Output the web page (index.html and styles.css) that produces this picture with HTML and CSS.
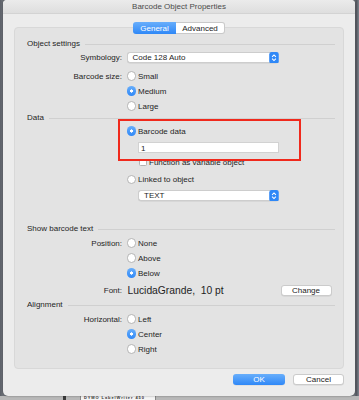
FILE: index.html
```html
<!DOCTYPE html>
<html lang="en">
<head>
    <meta charset="UTF-8">
    <title>Barcode Object Properties</title>
    <link rel="stylesheet" href="styles.css">
</head>
<body>
    <div class="desk">
        <div class="window">
            <div class="titlebar">Barcode Object Properties</div>

            <div class="tabs">
                <span class="tab on">General</span><span class="tab">Advanced</span>
            </div>

            <div class="group">
                <!-- Object settings -->
                <div class="hdr"><span>Object settings</span><i></i></div>
                <div class="row sym">
                    <span class="lbl">Symbology:</span>
                    <div class="popup sym-pop">
                        <span>Code 128 Auto</span>
                        <svg class="step" viewBox="0 0 10 12"><rect width="10" height="12" rx="2.5"/><path d="M3 5 L5 3 L7 5 M3 7 L5 9 L7 7"/></svg>
                    </div>
                </div>
                <div class="row size">
                    <span class="lbl">Barcode size:</span>
                    <span class="radio"></span><span class="opt">Small</span>
                </div>
                <div class="row">
                    <span class="lbl"></span>
                    <span class="radio on"></span><span class="opt">Medium</span>
                </div>
                <div class="row">
                    <span class="lbl"></span>
                    <span class="radio"></span><span class="opt">Large</span>
                </div>

                <!-- Data -->
                <div class="hdr"><span>Data</span><i></i></div>
                <div class="row bdata">
                    <span class="lbl"></span>
                    <span class="radio on"></span><span class="opt">Barcode data</span>
                </div>
                <div class="row field-row">
                    <span class="lbl"></span>
                    <div class="field">1</div>
                </div>
                <div class="row check-row">
                    <span class="lbl"></span>
                    <span class="check"></span><span class="opt">Function as variable object</span>
                </div>
                <div class="row linked">
                    <span class="lbl"></span>
                    <span class="radio"></span><span class="opt">Linked to object</span>
                </div>
                <div class="row text-row">
                    <span class="lbl"></span>
                    <div class="popup obj-pop">
                        <span>TEXT</span>
                        <svg class="step" viewBox="0 0 10 12"><rect width="10" height="12" rx="2.5"/><path d="M3 5 L5 3 L7 5 M3 7 L5 9 L7 7"/></svg>
                    </div>
                </div>

                <!-- Show barcode text -->
                <div class="hdr show"><span>Show barcode text</span><i></i></div>
                <div class="row pos">
                    <span class="lbl">Position:</span>
                    <span class="radio"></span><span class="opt">None</span>
                </div>
                <div class="row">
                    <span class="lbl"></span>
                    <span class="radio"></span><span class="opt">Above</span>
                </div>
                <div class="row">
                    <span class="lbl"></span>
                    <span class="radio on"></span><span class="opt">Below</span>
                </div>
                <div class="row font-row">
                    <span class="lbl">Font:</span>
                    <span class="font-name">LucidaGrande,&nbsp; 10 pt</span>
                    <span class="btn change">Change</span>
                </div>

                <!-- Alignment -->
                <div class="hdr align"><span>Alignment</span><i></i></div>
                <div class="row horiz">
                    <span class="lbl">Horizontal:</span>
                    <span class="radio"></span><span class="opt">Left</span>
                </div>
                <div class="row">
                    <span class="lbl"></span>
                    <span class="radio on"></span><span class="opt">Center</span>
                </div>
                <div class="row">
                    <span class="lbl"></span>
                    <span class="radio"></span><span class="opt">Right</span>
                </div>
            </div>

            <div class="footer">
                <span class="btn ok">OK</span>
                <span class="btn">Cancel</span>
            </div>

            <div class="highlight"></div>
        </div>

        <div class="under">
            <span class="mark"></span>
            <span class="printer">DYMO LabelWriter 450</span>
        </div>
    </div>
</body>
</html>
```

FILE: styles.css
```css
:root {
    --text: #1e1e1e;
    --blue: #2f88f7;
    --blue-light: #68aefb;
    --line: #d0d0d0;
}

body {
    margin: 0;
    font-family: 'Liberation Sans', Arial, sans-serif;
    font-size: 8px;
    color: var(--text);
    background: #63676d;
}

.desk {
    width: 359px;
    height: 400px;
    overflow: hidden;
    background: linear-gradient(to right, #5c6068 0, #6f737a 3px, #6f737a 355px, #4d5058 356px, #7d838c 359px);
}

.window {
    position: relative;
    margin-left: 3px;
    width: 352px;
    height: 396px;
    background: #ececec;
    border-radius: 4px 4px 5px 5px;
    box-shadow: 0 0 2px rgba(0, 0, 0, 0.45);
}

.titlebar {
    height: 14px;
    line-height: 14px;
    text-align: center;
    color: #4b4b4b;
    background: linear-gradient(#ebebeb, #dedede);
    border-bottom: 1px solid #d3d3d3;
    border-radius: 4px 4px 0 0;
    box-sizing: border-box;
}

.tabs {
    position: relative;
    z-index: 1;
    display: flex;
    justify-content: center;
    margin-top: 8px;
    height: 12px;
}

.tab {
    display: flex;
    align-items: center;
    justify-content: center;
    width: 49px;
    background: #fff;
    border: 1px solid #c9c9c9;
    border-left: none;
    border-radius: 0 3px 3px 0;
    box-sizing: border-box;
    color: #1e1e1e;
}

.tab.on {
    width: 43px;
    color: #fff;
    background: linear-gradient(var(--blue-light), var(--blue));
    border: none;
    border-radius: 3px 0 0 3px;
}

.group {
    margin: -7px 11px 0;
    padding: 11px 8px 11px 12px;
    background: #e3e3e3;
    border: 1px solid #d8d8d8;
    border-radius: 4px;
}

.hdr {
    display: flex;
    align-items: center;
    height: 8px;
}

.hdr i {
    flex: 1;
    height: 1px;
    margin: 2px 0 0 5px;
    background: var(--line);
}

.hdr.show {
    margin-top: 23px;
}

.hdr.align {
    margin-top: 2.5px;
}

.row {
    display: flex;
    align-items: center;
    height: 15px;
}

.lbl {
    width: 95px;
    margin-right: 4.5px;
    text-align: right;
    flex-shrink: 0;
}

.row.sym { margin-top: 3px; }
.row.size { margin-top: 3.5px; }
.row.bdata { margin-top: 2px; }
.row.field-row { margin-top: 3px; height: 12px; }
.row.check-row { margin-top: 1.5px; }
.row.linked { margin-top: 2px; }
.row.text-row { margin-top: 2.5px; height: 12px; }
.row.pos { margin-top: 3px; }
.row.font-row { margin-top: 2.5px; }
.row.horiz { margin-top: 3px; }

.radio {
    width: 9.5px;
    height: 9.5px;
    border-radius: 50%;
    background: #fff;
    border: 1px solid #b3b3b3;
    box-sizing: border-box;
    margin-right: 2px;
    flex-shrink: 0;
}

.radio.on {
    border: none;
    background: radial-gradient(circle, #fff 0, #fff 1.4px, transparent 1.8px), linear-gradient(var(--blue-light), var(--blue));
}

.opt {
    white-space: nowrap;
}

.popup {
    display: flex;
    align-items: center;
    height: 11.5px;
    background: #fff;
    border: 1px solid #cdcdcd;
    border-right: none;
    border-radius: 3px;
    box-sizing: border-box;
    box-shadow: 0 0.5px 0.5px rgba(0, 0, 0, 0.1);
}

.popup span {
    flex: 1;
    padding-left: 5px;
}

.sym-pop { width: 152.5px; }

.obj-pop {
    width: 141px;
    margin-left: 11.5px;
}

.step {
    width: 10px;
    height: 11.5px;
    margin-top: -1px;
    margin-bottom: -1px;
}

.step rect { fill: var(--blue); }

.step path {
    fill: none;
    stroke: #fff;
    stroke-width: 1.1;
}

.field {
    width: 141px;
    height: 11.5px;
    line-height: 11px;
    margin-left: 11.5px;
    padding-left: 2px;
    background: #fff;
    border: 1px solid #d2d2d2;
    box-sizing: border-box;
}

.check {
    width: 7.5px;
    height: 7.5px;
    margin: 0 2.5px 0 12.5px;
    background: #fff;
    border: 1px solid #b3b3b3;
    border-radius: 1.5px;
    box-sizing: border-box;
    flex-shrink: 0;
}

.font-name {
    font-size: 10.3px;
    margin-left: 1px;
}

.btn {
    display: inline-flex;
    align-items: center;
    justify-content: center;
    width: 51px;
    height: 11.5px;
    background: #fff;
    border: 1px solid #cbcbcb;
    border-radius: 3px;
    box-sizing: border-box;
    color: #222;
    box-shadow: 0 0.5px 0.5px rgba(0, 0, 0, 0.1);
}

.btn.change {
    margin-left: auto;
    margin-right: 3.5px;
}

.footer {
    display: flex;
    justify-content: flex-end;
    gap: 8px;
    margin-top: 5px;
    padding-right: 11px;
}

.btn.ok {
    width: 52px;
    color: #fff;
    border: none;
    background: linear-gradient(var(--blue-light), var(--blue));
}

.highlight {
    position: absolute;
    left: 115px;
    top: 119px;
    width: 183px;
    height: 42px;
    border: 2px solid #f0291c;
    box-sizing: border-box;
}

.under {
    display: flex;
    align-items: center;
    height: 4px;
    background: #b8b8b8;
}

.mark {
    width: 3px;
    height: 4px;
    margin: 0 14px 0 63px;
    background: #3a3a3a;
}

.printer {
    height: 4px;
    padding: 0 10px 0 3px;
    background: #f4f4f4;
    border-left: 1px solid #888;
    border-right: 1px solid #888;
    font-size: 4px;
    line-height: 4px;
    font-weight: bold;
    letter-spacing: 0.9px;
    color: #333;
}
```
